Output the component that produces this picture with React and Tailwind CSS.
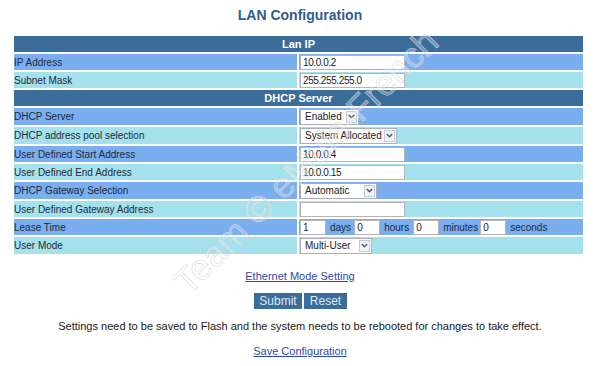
import React from 'react';

const BLUE = 'bg-[#7aaeee]';
const CYAN = 'bg-[#a5e1ec]';

const Chevron = () => (
    <svg width="7" height="5" viewBox="0 0 7 5">
        <path d="M0.8 1 L3.5 3.8 L6.2 1" fill="none" stroke="#4a5a78" strokeWidth="1.4" />
    </svg>
);

const Select = ({ value, width }) => (
    <div className={`flex items-center justify-between h-[16px] border border-[#a8b0bc] bg-white pl-[4px] pr-[1px] ${width}`}>
        <span className="text-[10px] text-[#222] leading-none">{value}</span>
        <span className="flex items-center justify-center w-[11px] h-[12px] border border-[#c3cbd8] bg-[#eef2f8]">
            <Chevron />
        </span>
    </div>
);

const TextBox = ({ value, width = 'w-[105px]' }) => (
    <input
        readOnly
        defaultValue={value}
        className={`h-[15px] ${width} border border-[#b4b4b4] bg-white px-[2px] text-[10px] tracking-[-0.4px] text-[#222] outline-none`}
    />
);

const Header = ({ title }) => (
    <div className="h-[16px] bg-[#3b6d9a] flex items-center justify-center text-[11px] font-bold text-white">
        {title}
    </div>
);

const Row = ({ label, color, tall, children }) => (
    <div className={`flex gap-[2px] ${tall ? 'h-[17px]' : 'h-[16px]'}`}>
        <div className={`w-[283px] ${color} flex items-center text-[10px] text-[#1c2a3a]`}>{label}</div>
        <div className={`flex-1 ${color} flex items-center pl-[1px]`}>{children}</div>
    </div>
);

export default function App() {
    return (
        <div className="relative w-[600px] h-[366px] overflow-hidden bg-white font-['Liberation_Sans',Arial,sans-serif]">
            <div className="h-[36px] pt-[7px] text-center text-[14px] leading-[16px] font-bold text-[#2f5e8e]">
                LAN Configuration
            </div>

            <div className="ml-[14px] w-[569px] flex flex-col gap-[2px]">
                <Header title="Lan IP" />
                <Row label="IP Address" color={BLUE}><TextBox value="10.0.0.2" /></Row>
                <Row label="Subnet Mask" color={CYAN}><TextBox value="255.255.255.0" /></Row>
                <Header title="DHCP Server" />
                <Row label="DHCP Server" color={BLUE} tall><Select value="Enabled" width="w-[59px]" /></Row>
                <Row label="DHCP address pool selection" color={CYAN} tall><Select value="System Allocated" width="w-[97px]" /></Row>
                <Row label="User Defined Start Address" color={BLUE}><TextBox value="10.0.0.4" /></Row>
                <Row label="User Defined End Address" color={CYAN}><TextBox value="10.0.0.15" /></Row>
                <Row label="DHCP Gateway Selection" color={BLUE} tall><Select value="Automatic" width="w-[77px]" /></Row>
                <Row label="User Defined Gateway Address" color={CYAN}><TextBox value="" /></Row>
                <Row label="Lease Time" color={BLUE}>
                    <div className="flex items-center text-[10px] text-[#1c2a3a]">
                        <TextBox value="1" width="w-[26px]" />
                        <span className="ml-[4px] mr-[3px]">days</span>
                        <TextBox value="0" width="w-[26px]" />
                        <span className="ml-[4px] mr-[4px]">hours</span>
                        <TextBox value="0" width="w-[26px]" />
                        <span className="ml-[4px] mr-[2px]">minutes</span>
                        <TextBox value="0" width="w-[26px]" />
                        <span className="ml-[4px]">seconds</span>
                    </div>
                </Row>
                <Row label="User Mode" color={CYAN} tall><Select value="Multi-User" width="w-[72px]" /></Row>
            </div>

            <div className="mt-[16px] text-center text-[11px] leading-[13px]">
                <a href="#" className="text-[#3048b0] underline">Ethernet Mode Setting</a>
            </div>

            <div className="mt-[10px] flex justify-center gap-[2px] pl-[1px]">
                <button className="h-[16px] w-[48px] bg-[#3b6d9a] text-[12px] leading-none text-[#dfe8f2]">Submit</button>
                <button className="h-[16px] w-[43px] bg-[#3b6d9a] text-[12px] leading-none text-[#dfe8f2]">Reset</button>
            </div>

            <div className="mt-[11px] text-center text-[11px] leading-[13px] text-[#1a1a1a]">
                Settings need to be saved to Flash and the system needs to be rebooted for changes to take effect.
            </div>

            <div className="mt-[12px] text-center text-[11px] leading-[13px]">
                <a href="#" className="text-[#3048b0] underline">Save Configuration</a>
            </div>

            {/* watermark laid over the page */}
            <div className="pointer-events-none absolute left-[306px] top-[162px] -translate-x-1/2 -translate-y-1/2 -rotate-[45deg] whitespace-nowrap text-[36px] text-white/30 [-webkit-text-stroke:0.5px_#d4d4d4]">
                Team © eMule-French
            </div>
        </div>
    );
}
